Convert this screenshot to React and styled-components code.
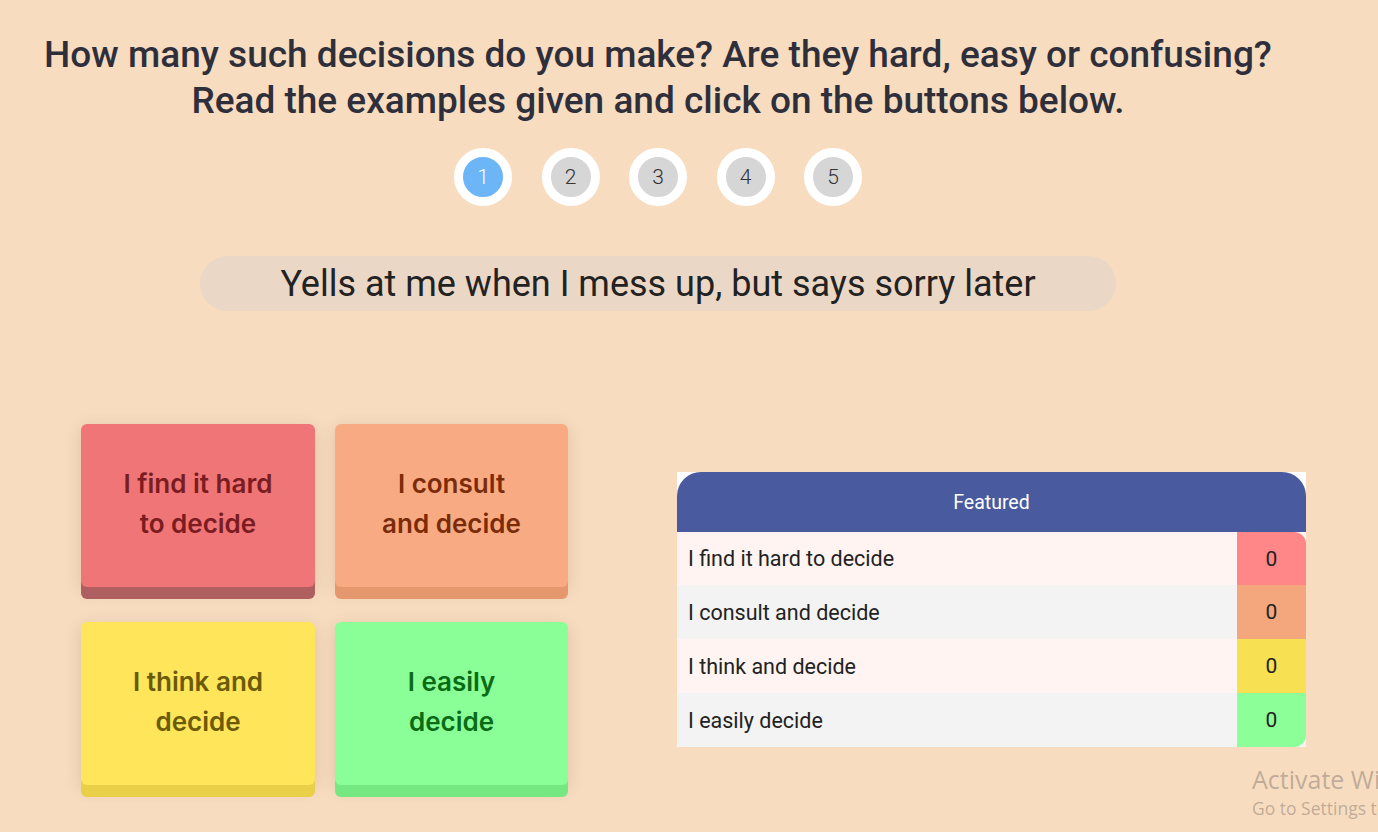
import React from "react";
import styled, { createGlobalStyle } from "styled-components";

const Global = createGlobalStyle`
  html, body { margin: 0; padding: 0; background: #f7dcc0; overflow: hidden; }
  body { font-family: Roboto, "Liberation Sans", sans-serif; }
  * { box-sizing: border-box; }
`;

const Page = styled.div`
  position: relative;
  width: 1378px;
  height: 832px;
  background: #f7dcc0;
  overflow: hidden;
`;

const Main = styled.main`
  width: 1316px;
  padding-top: 32px;
  display: flex;
  flex-direction: column;
  align-items: center;
`;

const Title = styled.h1`
  margin: 0;
  font-family: Roboto, "Liberation Sans", sans-serif;
  font-weight: 500;
  font-size: 37px;
  line-height: 46px;
  color: #2f2f3b;
  text-align: center;
  white-space: nowrap;
`;

const Steps = styled.div`
  margin-top: 24px;
  display: flex;
  gap: 29.5px;
`;

const Step = styled.div`
  width: 58px;
  height: 58px;
  border-radius: 50%;
  border: 9px solid #ffffff;
  background: ${(p) => (p.$active ? "#6cb6f8" : "#d6d6d6")};
  color: ${(p) => (p.$active ? "#ffffff" : "#333333")};
  display: flex;
  align-items: center;
  justify-content: center;
  font-size: 21px;
  font-weight: 300;
  font-family: Roboto, sans-serif;
`;

const Prompt = styled.div`
  margin-top: 50px;
  width: 916px;
  height: 55px;
  border-radius: 28px;
  background: #ebd7c5;
  display: flex;
  align-items: center;
  justify-content: center;
  font-size: 36px;
  font-weight: 400;
  color: #222222;
  white-space: nowrap;
`;

const Bottom = styled.section`
  margin-top: 113px;
  align-self: stretch;
  display: flex;
  align-items: flex-start;
  padding-left: 81px;
`;

const CardGrid = styled.div`
  display: grid;
  grid-template-columns: 234px 233px;
  column-gap: 20px;
  row-gap: 35px;
`;

const Card = styled.button`
  height: 163px;
  border: none;
  border-radius: 6px;
  background: ${(p) => p.$bg};
  color: ${(p) => p.$fg};
  box-shadow: 0 12px 0 ${(p) => p.$edge}, 0 4px 16px rgba(120, 70, 30, 0.18);
  font-family: Inter, "Noto Sans", sans-serif;
  font-weight: 600;
  font-size: 26px;
  line-height: 40px;
  text-align: center;
  display: flex;
  align-items: center;
  justify-content: center;
  padding: 0 20px 3px;
  cursor: pointer;
  white-space: nowrap;
`;

const Table = styled.div`
  margin-left: 109px;
  margin-top: 48px;
  width: 629px;
  background: #ffffff;
  display: flex;
  flex-direction: column;
`;

const Header = styled.div`
  height: 60px;
  background: #4a5a9e;
  border-radius: 24px 24px 0 0;
  color: #ffffff;
  font-size: 19.5px;
  display: flex;
  align-items: center;
  justify-content: center;
`;

const Row = styled.div`
  display: grid;
  grid-template-columns: 1fr 69px;
  height: ${(p) => (p.$h ? p.$h : 54)}px;
  background: ${(p) => (p.$alt ? "#f3f3f3" : "#fff4f1")};
`;

const Label = styled.div`
  display: flex;
  align-items: center;
  padding-left: 11px;
  font-size: 21.5px;
  color: #222222;
`;

const Value = styled.div`
  display: flex;
  align-items: center;
  justify-content: center;
  font-size: 21px;
  color: #222222;
  background: ${(p) => p.$bg};
  border-top-right-radius: ${(p) => (p.$first ? "12px" : "0")};
  border-bottom-right-radius: ${(p) => (p.$last ? "12px" : "0")};
`;

const Watermark = styled.div`
  position: absolute;
  left: 1252px;
  top: 763px;
  white-space: nowrap;
  font-family: "Open Sans", "Noto Sans", sans-serif;
  color: rgba(120, 110, 100, 0.45);
`;

const WmTitle = styled.div`
  font-size: 25px;
  line-height: 32px;
`;

const WmSub = styled.div`
  font-size: 17.5px;
  line-height: 26px;
`;

const cards = [
  { text: ["I find it hard", "to decide"], bg: "#ef7576", edge: "#b05f61", fg: "#7a1c20" },
  { text: ["I consult", "and decide"], bg: "#f8ab82", edge: "#e5976e", fg: "#7a2c0a" },
  { text: ["I think and", "decide"], bg: "#ffe55a", edge: "#e9d048", fg: "#6b5a06" },
  { text: ["I easily", "decide"], bg: "#8aff98", edge: "#76e882", fg: "#0b6b15" },
];

const rows = [
  { label: "I find it hard to decide", color: "#ff8787", h: 53 },
  { label: "I consult and decide", color: "#f4a77d", h: 54 },
  { label: "I think and decide", color: "#f7e052", h: 54 },
  { label: "I easily decide", color: "#8cff99", h: 54 },
];

export default function App() {
  return (
    <Page>
      <Global />
      <Main>
        <Title>
          How many such decisions do you make? Are they hard, easy or confusing?
          <br />
          Read the examples given and click on the buttons below.
        </Title>
        <Steps>
          {[1, 2, 3, 4, 5].map((n) => (
            <Step key={n} $active={n === 1}>
              {n}
            </Step>
          ))}
        </Steps>
        <Prompt>Yells at me when I mess up, but says sorry later</Prompt>
        <Bottom>
          <CardGrid>
            {cards.map((c) => (
              <Card key={c.text[0]} $bg={c.bg} $edge={c.edge} $fg={c.fg}>
                <span>
                  {c.text[0]}
                  <br />
                  {c.text[1]}
                </span>
              </Card>
            ))}
          </CardGrid>
          <Table>
            <Header>Featured</Header>
            {rows.map((r, i) => (
              <Row key={r.label} $alt={i % 2 === 1} $h={r.h}>
                <Label>{r.label}</Label>
                <Value $bg={r.color} $first={i === 0} $last={i === rows.length - 1}>
                  0
                </Value>
              </Row>
            ))}
          </Table>
        </Bottom>
      </Main>
      <Watermark>
        <WmTitle>Activate Windows</WmTitle>
        <WmSub>Go to Settings to activate Windows.</WmSub>
      </Watermark>
    </Page>
  );
}
